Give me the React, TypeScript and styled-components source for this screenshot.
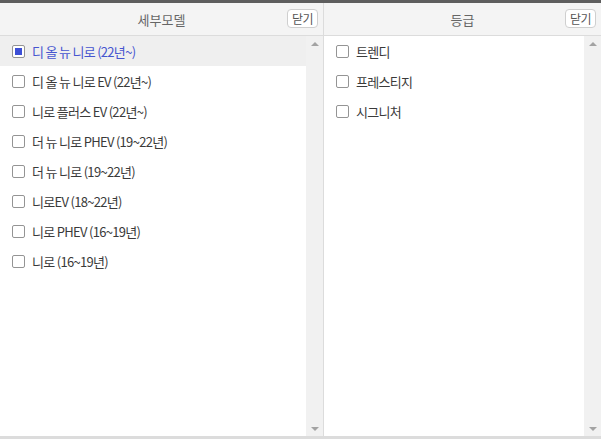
import styled, { createGlobalStyle } from "styled-components";

const GlobalStyle = createGlobalStyle`
  html, body {
    margin: 0;
    padding: 0;
    background: #fff;
  }
  body {
    font-family: "Noto Sans CJK KR", "Noto Sans", sans-serif;
    color: #333;
  }
`;

const Frame = styled.div`
  width: 601px;
  height: 439px;
  box-sizing: border-box;
  border-top: 3px solid #5e5e5e;
  border-bottom: 3px solid #dcdcdc;
  display: flex;
  overflow: hidden;
`;

const Panel = styled.section<{ $width: number; $divider?: boolean }>`
  width: ${(p) => p.$width}px;
  flex: none;
  display: flex;
  flex-direction: column;
  border-right: ${(p) => (p.$divider ? "1px solid #dcdcdc" : "none")};
  box-sizing: border-box;
`;

const Header = styled.header`
  position: relative;
  height: 32px;
  flex: none;
  background: #f4f4f4;
  border-bottom: 1px solid #dcdcdc;
  display: flex;
  align-items: center;
  justify-content: center;
  font-size: 13px;
  color: #666;
`;

const CloseBtn = styled.button`
  position: absolute;
  right: 5px;
  top: 6px;
  height: 19px;
  padding: 0 4px;
  border: 1px solid #cfcfcf;
  border-radius: 4px;
  background: #fff;
  font-family: inherit;
  font-size: 12px;
  line-height: 16px;
  letter-spacing: -0.5px;
  color: #555;
`;

const Body = styled.div`
  flex: 1;
  display: flex;
  min-height: 0;
`;

const List = styled.ul`
  flex: 1;
  margin: 0;
  padding: 0;
  list-style: none;
`;

const Row = styled.li<{ $active?: boolean }>`
  height: 30px;
  display: flex;
  align-items: center;
  padding-left: 12px;
  gap: 7px;
  font-size: 13px;
  letter-spacing: -0.7px;
  background: ${(p) => (p.$active ? "#efefef" : "transparent")};
  color: ${(p) => (p.$active ? "#4655cf" : "#3a3a3a")};
`;

const Box = styled.span<{ $checked?: boolean }>`
  width: 11px;
  height: 11px;
  border: 1px solid #949494;
  border-radius: 2px;
  background: #fff;
  flex: none;
  display: flex;
  align-items: center;
  justify-content: center;
  &::after {
    content: "";
    width: 7px;
    height: 7px;
    background: ${(p) => (p.$checked ? "#3c4fd6" : "transparent")};
  }
`;

const Scroll = styled.div`
  width: 17px;
  flex: none;
  background: #f1f1f1;
  display: flex;
  flex-direction: column;
  justify-content: space-between;
  align-items: center;
  padding: 6px 0 5px;
  box-sizing: border-box;
`;

const Arrow = styled.span<{ $down?: boolean }>`
  width: 0;
  height: 0;
  border-left: 4px solid transparent;
  border-right: 4px solid transparent;
  ${(p) =>
    p.$down
      ? "border-top: 4px solid #a3a3a3;"
      : "border-bottom: 4px solid #a3a3a3;"}
`;

const models = [
  "디 올 뉴 니로 (22년~)",
  "디 올 뉴 니로 EV (22년~)",
  "니로 플러스 EV (22년~)",
  "더 뉴 니로 PHEV (19~22년)",
  "더 뉴 니로 (19~22년)",
  "니로EV (18~22년)",
  "니로 PHEV (16~19년)",
  "니로 (16~19년)",
];

const grades = ["트렌디", "프레스티지", "시그니처"];

function Column({
  title,
  items,
  width,
  divider,
  active,
}: {
  title: string;
  items: string[];
  width: number;
  divider?: boolean;
  active?: number;
}) {
  return (
    <Panel $width={width} $divider={divider}>
      <Header>
        {title}
        <CloseBtn>닫기</CloseBtn>
      </Header>
      <Body>
        <List>
          {items.map((item, i) => (
            <Row key={item} $active={i === active}>
              <Box $checked={i === active} />
              {item}
            </Row>
          ))}
        </List>
        <Scroll>
          <Arrow />
          <Arrow $down />
        </Scroll>
      </Body>
    </Panel>
  );
}

export default function App() {
  return (
    <>
      <GlobalStyle />
      <Frame>
        <Column title="세부모델" items={models} width={324} divider active={0} />
        <Column title="등급" items={grades} width={277} />
      </Frame>
    </>
  );
}
